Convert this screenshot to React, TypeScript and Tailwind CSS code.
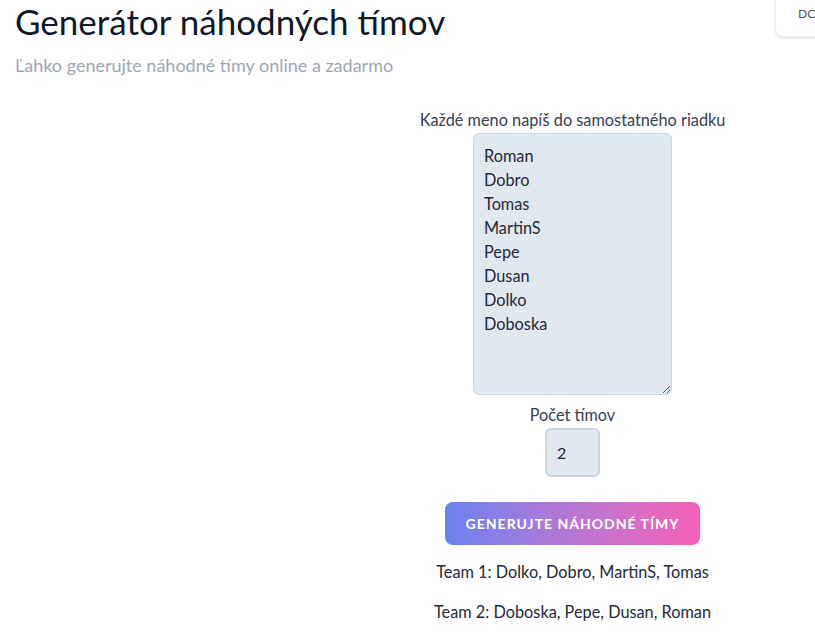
import React from "react";

const names = ["Roman", "Dobro", "Tomas", "MartinS", "Pepe", "Dusan", "Dolko", "Doboska"];

export default function App() {
  return (
    <div className="min-h-screen bg-white overflow-hidden text-[#1f2937]" style={{ fontFamily: "Lato, 'Noto Sans', sans-serif" }}>
      <div className="flex items-start justify-between pl-[15px]">
        <h1 className="mt-[1px] text-[35px] leading-[40px] font-normal text-[#111827]">Generátor náhodných tímov</h1>
        <div className="-mt-[10px] mr-[-40px] w-[80px] h-[47px] rounded-lg border border-[#f0f0f0] shadow-sm flex items-end pl-[22px] pb-[13px]">
          <span className="text-[12px] text-[#4b5563]">DC</span>
        </div>
      </div>
      <p className="pl-[15px] mt-[12px] text-[18px] leading-[24px] text-[#a0a7b4]">Ľahko generujte náhodné tímy online a zadarmo</p>
      <div className="grid grid-cols-[330px_1fr] mt-[33px]">
        <div />
        <div className="flex flex-col items-center">
          <label className="text-[16.3px] leading-[20px] text-[#374151]">Každé meno napíš do samostatného riadku</label>
          <textarea
            className="mt-[3px] w-[199px] h-[262px] rounded-md border border-[#cbd5e1] bg-[#e2e8f0] px-[10px] py-[10px] text-[16.3px] leading-[24px] text-[#1f2937] outline-none"
            style={{ fontFamily: "Lato, 'Noto Sans', sans-serif" }}
            defaultValue={names.join("\n")}
            spellCheck={false}
          />
          <label className="mt-[10px] text-[16.3px] leading-[20px] text-[#374151]">Počet tímov</label>
          <input
            className="mt-[3px] w-[55px] h-[49px] rounded-md border-2 border-[#cbd5e1] bg-[#e2e8f0] pl-[10px] text-[16px] text-[#1f2937] outline-none"
            style={{ fontFamily: "Lato, 'Noto Sans', sans-serif" }}
            type="number"
            defaultValue={2}
          />
          <button className="mt-[25px] w-[255px] h-[43px] rounded-lg bg-gradient-to-r from-[#6a80ef] to-[#f65fb8] text-white text-[14px] font-bold uppercase tracking-[1px]">
            Generujte náhodné tímy
          </button>
          <p className="mt-[17px] text-[16.3px] leading-[20px] text-[#1f2937]">Team 1: Dolko, Dobro, MartinS, Tomas</p>
          <p className="mt-[20px] text-[16.3px] leading-[20px] text-[#1f2937]">Team 2: Doboska, Pepe, Dusan, Roman</p>
        </div>
      </div>
    </div>
  );
}
